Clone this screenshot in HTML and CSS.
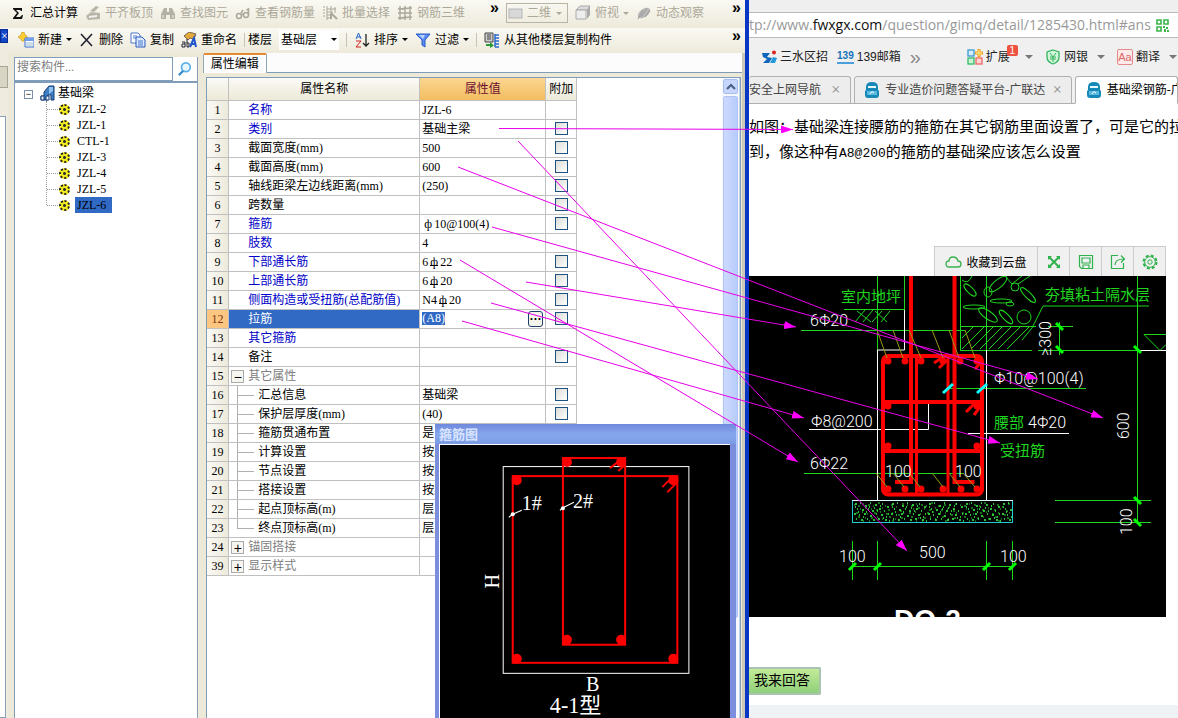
FILE: index.html
```html
<!DOCTYPE html>
<html lang="zh-CN">
<head>
<meta charset="utf-8">
<title>属性编辑</title>
<link rel="stylesheet" href="styles.css">
</head>
<body>
<div class="desktop">
<main class="app">
  <div class="toolbar toolbar-view">
    <button class="tool"><svg class="ico" viewBox="0 0 16 16"><path d="M3 3h9v3h-1l-1-1H6l3 3-3 4h4l2-2h1l-1 4H3v-1l4-5-4-4z" fill="#111"/></svg>汇总计算</button>
    <button class="tool off"><svg class="ico" viewBox="0 0 16 16"><path d="M1 11l5-4 9 1v6l-12 1zM5 6l6-5 3 1-5 5z" fill="#b9b6a8"/><path d="M4 11l8-1v2l-8 1z" fill="#eee"/></svg>平齐板顶</button>
    <button class="tool off"><svg class="ico" viewBox="0 0 16 16"><path d="M4 3h3v4h2V3h3l3 6v5h-5v-4H6v4H1V9z" fill="#b3b0a4"/><path d="M3 10v3M13 10v3" stroke="#eee"/></svg>查找图元</button>
    <button class="tool off"><svg class="ico" viewBox="0 0 16 16"><g fill="none" stroke="#aaa79c" stroke-width="1.500"><circle cx="4" cy="11" r="2.500"/><circle cx="11" cy="10" r="2.500"/><path d="M6 10l2-1M13.500 10V4l-2 1M6 8l2-3"/></g></svg>查看钢筋量</button>
    <button class="tool off"><svg class="ico" viewBox="0 0 16 16"><path d="M1 2h2M1 5h2M1 8h2M1 11h2M5 1v14M5 4h9M5 7h6M5 10h5M5 13h4M9 1v6M13 2v6" stroke="#aaa79c" fill="none"/><path d="M9 8l6 6M9 8v6" stroke="#aaa79c" stroke-width="2"/></svg>批量选择</button>
    <button class="tool off"><svg class="ico" viewBox="0 0 16 16"><path d="M3 1v14M8 1v14M13 1v14M1 4l14-1M1 8h14M1 13l14-1" stroke="#aaa79c" stroke-width="1.4" fill="none"/></svg>钢筋三维</button>
    <button class="more" aria-label="更多">»</button>
    <label class="view-mode off"><svg class="ico" viewBox="0 0 16 16"><rect x="1" y="4" width="13" height="9" fill="#d8d8d8" stroke="#b5b5b5"/></svg><select aria-label="视图"><option>二维</option></select><i class="caret"></i></label>
    <button class="tool off"><svg class="ico" viewBox="0 0 16 16"><path d="M1 5l4-4h10l-3 4z" fill="#ddd" stroke="#aaa"/><path d="M1 5h10v9H1z" fill="#eee" stroke="#aaa"/><path d="M12 5l3-4v9l-3 4z" fill="#aaa"/></svg>俯视<i class="caret"></i></button>
    <button class="tool off"><svg class="ico" viewBox="0 0 16 16"><ellipse cx="8" cy="8" rx="7" ry="4" fill="#bbb" transform="rotate(-35 8 8)"/><path d="M2 14l5-9M5 12l6-9M9 12l5-7" stroke="#999" fill="none"/></svg>动态观察</button>
    <button class="more last" aria-label="更多">»</button>
  </div>

  <div class="toolbar toolbar-edit">
    <button class="tool"><svg class="ico" viewBox="0 0 16 16"><path d="M4 0h2l1 3 2 1v2l-2 1-1 2H4L3 7 0 5l3-2z" fill="#fc3" stroke="#a80" stroke-width=".5"/><path d="M7 6h9v9H7z" fill="#fff" stroke="#3a6fd0"/><path d="M7 6h9v3H7z" fill="#6f9fee"/><path d="M8 11h7M8 13h7" stroke="#9bc"/></svg>新建<i class="caret"></i></button>
    <button class="tool"><svg class="ico" viewBox="0 0 16 16"><path d="M2 2l11 12M13 2L2 14" stroke="#223" stroke-width="1.6"/></svg>删除</button>
    <button class="tool"><svg class="ico" viewBox="0 0 16 16"><path d="M1 1h7l2 2v8H1z" fill="#fff" stroke="#4a76c8"/><path d="M6 5h6l3 3v7H6z" fill="#dceaff" stroke="#2858b8"/><path d="M3 4h4M3 6h3M8 9h5M8 11h5M8 13h5" stroke="#4a76c8"/></svg>复制</button>
    <button class="tool"><svg class="ico" viewBox="0 0 16 16"><path d="M3 4l5-4 7 2-2 5-4-1-2 2z" fill="#e5a93a" stroke="#765"/><path d="M1 10h3v5H1v-3h3M6 7v8h2v-4H6" stroke="#223" fill="none"/><path d="M9 15l4-9 2 9M10 12h5" stroke="#25c" stroke-width="2" fill="none"/></svg>重命名</button>
    <i class="sep"></i>
    <label class="floor" for="floor">楼层</label>
    <span class="floor-box"><select id="floor"><option>基础层</option></select><i class="caret"></i></span>
    <i class="sep"></i>
    <button class="tool"><svg class="ico" viewBox="0 0 16 16"><path d="M2 7l2.500-6 2.500 6M3 5h4" stroke="#26c" fill="none"/><path d="M2 9h5l-5 6h5" stroke="#c22" fill="none"/><path d="M12 2v12M9 11l3 3 3-3" stroke="#222" fill="none" stroke-width="1.300"/></svg>排序<i class="caret"></i></button>
    <button class="tool"><svg class="ico" viewBox="0 0 16 16"><path d="M1 2h14L10 8v7l-3-2V8z" fill="#5b8df0" stroke="#2458c8"/><path d="M4 3h6L8 7z" fill="#bcd4ff"/></svg>过滤<i class="caret"></i></button>
    <i class="sep"></i>
    <button class="tool"><svg class="ico" viewBox="0 0 16 16"><path d="M1 1h8v9H1z" fill="#ccc" stroke="#444"/><path d="M3 3h4M3 5h4M3 7h4" stroke="#444"/><path d="M11 2v13M11 3h4M11 6h4M11 9h4M11 12h4M11 15h4" stroke="#2a6ad0" stroke-width="1.500"/><path d="M2 12h4v-2l4 3.500-4 2.500v-2H2z" fill="#2b9a3a"/></svg>从其他楼层复制构件</button>
    <button class="more last" aria-label="更多">»</button>
  </div>

  <div class="work">
    <div class="dock"><button class="dock-close" aria-label="关闭">×</button><div class="dock-tab"></div><div class="dock-body"></div></div>
    <aside class="side">
      <div class="search"><input type="text" placeholder="搜索构件..." aria-label="搜索构件"><button class="find" aria-label="搜索"><svg viewBox="0 0 16 16" width="14" height="14"><circle cx="9" cy="6" r="5" fill="#e8f7ff" stroke="#5ab0e8" stroke-width="2"/><path d="M6 10l-5 5" stroke="#3a8ccc" stroke-width="2.500"/></svg></button></div>
      <ul class="tree">
        <li class="root"><i class="twist">−</i><svg class="ico" viewBox="0 0 16 16"><path d="M1 15v-4h3V7l5-6h5v14h-3v-5H8v5z" fill="#3f7fc4" stroke="#123a70"/><path d="M1 11h3v4H1zM6 11h3v4H6z" fill="#e8f2ff" stroke="#123a70"/><path d="M9 2v7l4-3V2z" fill="#8fc0f0"/></svg>基础梁
          <ul class="leaves">
            <li><i class="gear"></i><span>JZL-2</span></li>
            <li><i class="gear"></i><span>JZL-1</span></li>
            <li><i class="gear"></i><span>CTL-1</span></li>
            <li><i class="gear"></i><span>JZL-3</span></li>
            <li><i class="gear"></i><span>JZL-4</span></li>
            <li><i class="gear"></i><span>JZL-5</span></li>
            <li class="current"><i class="gear"></i><span>JZL-6</span></li>
          </ul>
        </li>
      </ul>
    </aside>
    <section class="editor">
      <div class="tabstrip"><button class="tab">属性编辑</button></div>
      <div class="sheet">
        <div class="grid-area">
        <table class="props">
          <colgroup><col class="c-num"><col class="c-name"><col class="c-val"><col class="c-add"></colgroup>
          <thead><tr><th></th><th>属性名称</th><th class="hot">属性值</th><th>附加</th></tr></thead>
          <tbody>
            <tr><th>1</th><td class="key">名称</td><td>JZL-6</td><td></td></tr>
            <tr><th>2</th><td class="key">类别</td><td>基础主梁</td><td><input type="checkbox" aria-label="附加 2"></td></tr>
            <tr><th>3</th><td>截面宽度(mm)</td><td>500</td><td><input type="checkbox" aria-label="附加 3"></td></tr>
            <tr><th>4</th><td>截面高度(mm)</td><td>600</td><td><input type="checkbox" aria-label="附加 4"></td></tr>
            <tr><th>5</th><td>轴线距梁左边线距离(mm)</td><td>(250)</td><td><input type="checkbox" aria-label="附加 5"></td></tr>
            <tr><th>6</th><td>跨数量</td><td></td><td><input type="checkbox" aria-label="附加 6"></td></tr>
            <tr><th>7</th><td class="key">箍筋</td><td><span class="bar">ф</span>10@100(4)</td><td><input type="checkbox" aria-label="附加 7"></td></tr>
            <tr><th>8</th><td class="key">肢数</td><td>4</td><td></td></tr>
            <tr><th>9</th><td class="key">下部通长筋</td><td>6<span class="bar hrb">ф</span>22</td><td><input type="checkbox" aria-label="附加 9"></td></tr>
            <tr><th>10</th><td class="key">上部通长筋</td><td>6<span class="bar hrb">ф</span>20</td><td><input type="checkbox" aria-label="附加 10"></td></tr>
            <tr><th>11</th><td class="key">侧面构造或受扭筋(总配筋值)</td><td>N4<span class="bar hrb">ф</span>20</td><td><input type="checkbox" aria-label="附加 11"></td></tr>
            <tr class="picked"><th>12</th><td>拉筋</td><td><div class="edit"><mark>(A8)</mark><button aria-label="更多选项">···</button></div></td><td><input type="checkbox" aria-label="附加 12"></td></tr>
            <tr><th>13</th><td class="key">其它箍筋</td><td></td><td></td></tr>
            <tr><th>14</th><td>备注</td><td></td><td><input type="checkbox" aria-label="附加 14"></td></tr>
            <tr class="group"><th>15</th><td><button>−</button>其它属性</td><td></td><td></td></tr>
            <tr class="sub"><th>16</th><td>汇总信息</td><td>基础梁</td><td><input type="checkbox" aria-label="附加 16"></td></tr>
            <tr class="sub"><th>17</th><td>保护层厚度(mm)</td><td>(40)</td><td><input type="checkbox" aria-label="附加 17"></td></tr>
            <tr class="sub"><th>18</th><td>箍筋贯通布置</td><td>是</td><td></td></tr>
            <tr class="sub"><th>19</th><td>计算设置</td><td>按默认</td><td></td></tr>
            <tr class="sub"><th>20</th><td>节点设置</td><td>按默认</td><td></td></tr>
            <tr class="sub"><th>21</th><td>搭接设置</td><td>按默认</td><td></td></tr>
            <tr class="sub"><th>22</th><td>起点顶标高(m)</td><td>层底</td><td></td></tr>
            <tr class="sub end"><th>23</th><td>终点顶标高(m)</td><td>层底</td><td></td></tr>
            <tr class="group"><th>24</th><td><button>+</button>锚固搭接</td><td></td><td></td></tr>
            <tr class="group"><th>39</th><td><button>+</button>显示样式</td><td></td><td></td></tr>
          </tbody>
        </table>
        </div>
        <div class="scroll"><button aria-label="向上"><svg viewBox="0 0 10 8" width="10" height="8"><path d="M1 6l4-4 4 4" fill="none" stroke="#4d6185" stroke-width="2.200"/></svg></button><div class="thumb"></div></div>
      </div>
    </section>
  </div>

  <section class="stirrup">
    <h2>箍筋图</h2>
    <svg class="stirrup-art" viewBox="440 446 290 272" preserveAspectRatio="xMidYMin slice">
      <rect x="503.500" y="467.500" width="185" height="206" fill="none" stroke="#fff"/>
      <g fill="none" stroke="#f00" stroke-width="2"><rect x="513" y="477" width="164" height="186"/><rect x="563" y="459" width="62" height="186"/><path d="M610 469l9-7M618 472l7-6M662 488l11-11M667 493l10-10"/></g>
      <g fill="#f00"><circle cx="517" cy="481" r="5"/><circle cx="673" cy="481" r="5"/><circle cx="517" cy="659" r="5"/><circle cx="673" cy="659" r="5"/><circle cx="567" cy="463" r="5"/><circle cx="621" cy="463" r="5"/><circle cx="567" cy="640" r="5"/><circle cx="621" cy="640" r="5"/></g>
      <path d="M509 518l4-3 9-4M560 511l4-3 10-5" stroke="#fff" fill="none"/><circle cx="513" cy="515" r="2" fill="#fff"/><circle cx="563" cy="509" r="2" fill="#fff"/>
      <g class="art-label"><text x="522" y="511">1#</text><text x="573" y="509">2#</text><text x="586" y="691">B</text><text transform="translate(499 589) rotate(-90)">H</text></g>
      <text class="art-title" x="550" y="713">4-1型</text>
    </svg>
  </section>
</main>

<section class="browser">
  <div class="address"><span class="url">tp://www.<b>fwxgx.com</b>/question/gimq/detail/1285430.html#ans</span><svg viewBox="0 0 13 13" width="13" height="13"><path d="M1 1h4v4H1zM8 1h4v4H8zM1 8h4v4H1z" fill="none" stroke="#39b54a" stroke-width="1.600"/><path d="M7 7h2v2H7zM10 8h2v2h-2zM8 10h2v3H8zM11 11h2v2h-2zM6 0v6M0 6.500h5" fill="#39b54a"/></svg></div>
  <nav class="links">
    <a href="#"><svg width="15" height="14" viewBox="0 0 15 14"><path d="M0 3h8l-3 4 5 1-3 5H1l4-4-4-2z" fill="#16b"/><path d="M8 13l3-6 4 1-2 5z" fill="#29d"/><circle cx="12" cy="2.500" r="2" fill="#d22"/></svg>三水区招</a>
    <a href="#"><b class="mail">139</b>139邮箱</a>
    <button class="chev" aria-label="更多书签">»</button>
    <i class="grip"></i>
    <a href="#" class="ext"><svg width="16" height="16" viewBox="0 0 16 16"><g stroke-width="1.300"><rect x="1" y="1" width="6" height="6" fill="#d5ecfa" stroke="#3b99cf"/><rect x="1" y="9" width="6" height="6" fill="#ccf2d5" stroke="#3b6"/><rect x="9" y="9" width="6" height="6" fill="#ffd5d0" stroke="#e66"/><path d="M12 0v8M8 4h8" stroke="#f0a020" stroke-width="3"/><path d="M12 1v6M9 4h6" stroke="#fd7"/></g></svg>扩展<em>1</em></a><i class="drop"></i>
    <a href="#"><svg width="16" height="16" viewBox="0 0 16 16"><path d="M8 1l6 2v5q0 5-6 7-6-2-6-7V3z" fill="#d2f5da" stroke="#34b560" stroke-width="1.300"/><path d="M5 4l3 4 3-4M8 8v5M5 8h6M5 10h6" fill="none" stroke="#34b560"/></svg>网银</a><i class="drop"></i>
    <a href="#"><b class="aa">Aa</b>翻译</a><i class="drop"></i>
  </nav>
  <div class="tabs">
    <a href="#" class="t1"><span>安全上网导航</span><i>×</i></a>
    <a href="#" class="t2"><svg class="bot" viewBox="0 0 16 16"><path d="M2 5q0-5 6-5t6 5v3l1 1v4q0 3-3 3H4q-3 0-3-3V9l1-1z" fill="#1689b8"/><path d="M4 4h8v2H4z" fill="#eaf8ff"/><path d="M3 9h10v4H3z" fill="#5bbce0"/><path d="M6 12q2-4 4-1" stroke="#fff" fill="none"/></svg><span>专业造价问题答疑平台-广联达</span><i>×</i></a>
    <a href="#" class="t3"><svg class="bot" viewBox="0 0 16 16"><path d="M2 5q0-5 6-5t6 5v3l1 1v4q0 3-3 3H4q-3 0-3-3V9l1-1z" fill="#1689b8"/><path d="M4 4h8v2H4z" fill="#eaf8ff"/><path d="M3 9h10v4H3z" fill="#5bbce0"/><path d="M6 12q2-4 4-1" stroke="#fff" fill="none"/></svg><span>基础梁钢筋-广</span></a>
  </div>
  <article class="page">
    <p class="question">如图：基础梁连接腰筋的箍筋在其它钢筋里面设置了，可是它的拉<br>到，像这种有<code>A8@200</code>的箍筋的基础梁应该怎么设置</p>
    <div class="figure">
      <div class="picbar">
        <button><svg width="17" height="14" viewBox="0 0 17 14"><path d="M4 12q-3 0-3-3t3-3q0-4 4-4t5 4q3 0 3 3t-3 3z" fill="none" stroke="#39b04e" stroke-width="1.300"/></svg>收藏到云盘</button>
        <button aria-label="放大"><svg width="16" height="16" viewBox="0 0 16 16"><path d="M3 3l10 10M13 3L3 13" stroke="#2fb24c" stroke-width="2"/><path d="M2 2h4L2 6zM14 2v4l-4-4zM2 14v-4l4 4zM14 14h-4l4-4z" fill="#2fb24c"/></svg></button>
        <button aria-label="保存"><svg width="16" height="16" viewBox="0 0 16 16"><path d="M1.500 1.500h13v13h-11l-2-2zM4 4h8v5H4zM5 14v-3h6v3" fill="none" stroke="#2fb24c" stroke-width="1.200"/></svg></button>
        <button aria-label="分享"><svg width="16" height="16" viewBox="0 0 16 16"><path d="M8 1.500H1.500v13h12V9M5 11q0-6 9-6M11 1.500L14.500 5 11 8.500" fill="none" stroke="#2fb24c" stroke-width="1.200"/></svg></button>
        <button aria-label="设置"><svg width="16" height="16" viewBox="0 0 16 16"><circle cx="8" cy="8" r="6.500" fill="none" stroke="#2fb24c" stroke-width="2" stroke-dasharray="3 2.100"/><circle cx="8" cy="8" r="5.300" fill="none" stroke="#2fb24c"/><circle cx="8" cy="8" r="2.200" fill="none" stroke="#2fb24c"/></svg></button>
      </div>
      <svg class="cad" viewBox="749 276 417 341">
        <defs>
          <pattern id="grit" width="37" height="22" patternUnits="userSpaceOnUse" x="853" y="501"><path d="M2 3h2M7 2h1M12 5h2M17 2h1M22 4h2M29 3h1M34 6h2M4 8h1M9 9h2M15 8h1M19 10h2M26 8h2M31 10h1M1 13h2M6 14h1M11 13h2M17 15h2M23 13h1M28 14h2M35 13h1M3 18h1M8 19h2M14 18h1M20 19h2M25 18h2M32 19h2M10 16h1M27 5h1M21 7h1M33 16h1M13 11h1M5 11h1M16 6h1M24 10h1M2 6h1M30 17h1M36 20h1" stroke="#3cff4a" stroke-width="1.300"/></pattern>
          <pattern id="grit-fine" width="53" height="22" patternUnits="userSpaceOnUse" x="853" y="501"><path d="M1 4h1M5 5h2M10 3h1M15 4h2M20 5h1M25 2h2M32 5h1M38 4h2M43 6h1M49 3h2M7 8h1M12 7h2M18 8h1M23 9h2M29 7h1M35 9h2M41 8h1M47 10h2M3 12h2M9 11h1M14 13h1M21 12h2M27 11h1M33 13h2M39 12h1M45 14h2M50 12h1M5 16h2M12 17h1M18 17h2M24 16h1M29 18h1M36 16h2M42 18h1M48 17h2M16 20h1M39 20h2M10 20h1" stroke="#2fe03c"/></pattern>
        </defs>
        <g fill="none" stroke="#1fd61f">
          <path d="M877.500 276v74M904.500 276v34M960.500 276v74M986.500 276v74M844 309.500h60M801 330.500h164M960 326.500h76M960 350.500h72M1038 350.500h99M950 388.500h136M1022 340l10-12 11-22h106M1059.500 322v33M1048 326.500h25M1137.500 276v248M804 473.500h159M1055 500.500h96M1055 522.500h96M852 566.500h161M852.500 541v39M877.500 541v39M986.500 541v39M1012.500 541v39M1144 334.500h22M1144 334.500l16 16 6-6"/>
          <path d="M855 322l10-12M863 322l10-12M857 311l14 11M872 322l10-11M881 322l9-11M875 311l12 11"/>
          <path d="M962 349l22-22M971 349l22-22M980 349l22-22M989 349l22-22M998 349l22-22M1007 349l22-22M962 338l11-11"/>
          <ellipse cx="970" cy="290" rx="8" ry="3" transform="rotate(45 970 290)"/><ellipse cx="988" cy="292" rx="4" ry="5"/><ellipse cx="998" cy="284" rx="11" ry="4" transform="rotate(-40 998 284)"/><ellipse cx="1015" cy="287" rx="4" ry="4"/><ellipse cx="1028" cy="295" rx="10" ry="3" transform="rotate(45 1028 295)"/><ellipse cx="1001" cy="301" rx="11" ry="2"/><ellipse cx="974" cy="307" rx="11" ry="2"/><ellipse cx="988" cy="315" rx="11" ry="4" transform="rotate(35 988 315)"/><ellipse cx="1006" cy="317" rx="9" ry="3" transform="rotate(45 1006 317)"/><circle cx="1024" cy="317" r="7"/><ellipse cx="1010" cy="304" rx="4" ry="2"/><path d="M962 280q6 5 10-4M1005 276l7 8 10-8M1018 284l12-8"/>
        </g>
        <path d="M904.500 310v40h-27v150M986.500 350v150M1140 350.500h26M809 429.500h119.500V401M968 433.500h101" fill="none" stroke="#fff"/>
        <g fill="none" stroke="#f00" stroke-width="4"><path d="M911 276v206h-16M954.500 276v206h20M883 402h98M883 451h98"/><path d="M916.500 356v138M948 356v138" stroke-width="3"/><rect x="883" y="356" width="99" height="138.500" rx="5"/><path d="M966 412l9-9M974 415l6-8M934 363l9-6M939 368l8-8M975 369l7-8" stroke-width="3"/></g>
        <g fill="#f00"><circle cx="888" cy="361" r="3.500"/><circle cx="905" cy="361" r="3.500"/><circle cx="921" cy="361" r="3.500"/><circle cx="943" cy="361" r="3.500"/><circle cx="960" cy="361" r="3.500"/><circle cx="977" cy="361" r="3.500"/><circle cx="888" cy="406" r="3.500"/><circle cx="977" cy="406" r="3.500"/><circle cx="888" cy="446" r="3.500"/><circle cx="977" cy="446" r="3.500"/><circle cx="888" cy="489" r="3.500"/><circle cx="905" cy="489" r="3.500"/><circle cx="921" cy="489" r="3.500"/><circle cx="943" cy="489" r="3.500"/><circle cx="961" cy="489" r="3.500"/><circle cx="977" cy="489" r="3.500"/></g>
        <path d="M877 330l10 28M893 330l10 28M909 330l12 28M932 330l11 28M949 330l10 28M965 330l10 28M876 473l11 14M893 473l11 14M909 473l11 14M932 473l11 14M949 473l11 14M963 473l12 14" fill="none" stroke="#9a9a10"/>
        <path d="M943 393l10-9M977 393l10-9" stroke="#1ff" stroke-width="3"/>
        <rect x="853" y="501" width="159" height="21" fill="url(#grit-fine)"/><rect x="852.500" y="500.500" width="160" height="22" fill="url(#grit)" stroke="#2cc"/><path d="M852 500.500h161" stroke="#dff"/>
        <path d="M1056 323l7 7M1056 346l7 7M1134 346l7 7M1134 497l7 7M1134 519l7 7M849 570l7-7M874 570l7-7M983 570l7-7M1009 570l7-7" stroke="#0f0" stroke-width="3"/>
        <g class="cad-num"><text x="810" y="326">6Φ20</text><text x="994" y="384">Φ10@100(4)</text><text x="811" y="427">Φ8@200</text><text x="1028" y="428">4Φ20</text><text x="810" y="469">6Φ22</text><text x="885" y="477">100</text><text x="955" y="477">100</text><text x="839" y="562">100</text><text x="919" y="558">500</text><text x="1000" y="562">100</text><text transform="translate(1051 356) rotate(-90)">≥300</text><text transform="translate(1129 439) rotate(-90)">600</text><text transform="translate(1132 535) rotate(-90)">100</text></g>
        <g class="cad-han"><text x="841" y="302">室内地坪</text><text x="1045" y="300">夯填粘土隔水层</text><text x="994" y="428">腰部</text><text x="1000" y="456">受扭筋</text></g>
        <text class="cad-title" x="894" y="629">DQ-2</text>
      </svg>
    </div>
    <button class="answer">我来回答</button>
  </article>
  <footer class="foot"></footer>
</section>

<svg class="arrows" viewBox="0 0 1178 718">
  <defs><marker id="tip" markerUnits="userSpaceOnUse" markerWidth="12" markerHeight="8" refX="12" refY="4" orient="auto"><path d="M0 0l12 4-12 4z" fill="#f0f"/></marker></defs>
  <g stroke="#e800e8" fill="none"><path d="M499 128.500L793 129.500" marker-end="url(#tip)"/><path d="M518 141L907 551" marker-end="url(#tip)"/><path d="M458 167L1103 418" marker-end="url(#tip)"/><path d="M492 227L1038 379" marker-end="url(#tip)"/><path d="M460 260L798 462" marker-end="url(#tip)"/><path d="M526 282L796 327" marker-end="url(#tip)"/><path d="M491 303L1000 443" marker-end="url(#tip)"/><path d="M462 321L804 418" marker-end="url(#tip)"/></g>
</svg>
</div>
</body>
</html>
```

FILE: styles.css
```css
* { box-sizing: border-box; }
body {
  margin: 0;
  font: 12px/16px "Liberation Serif", "Noto Sans CJK SC", sans-serif;
  color: #000;
}
button, input, select { font: inherit; color: inherit; margin: 0; padding: 0; border: 0; background: none; }
a { color: inherit; text-decoration: none; }
i, em { font-style: normal; }
svg { flex: none; }
ul { list-style: none; margin: 0; padding: 0; }

.desktop { position: relative; display: flex; height: 100vh; overflow: hidden; }
.arrows { position: absolute; inset: 0; width: 100%; height: 100%; pointer-events: none; }

/* Modelling application */
.app {
  position: relative;
  flex: 745 1 0;
  min-width: 0;
  display: flex;
  flex-direction: column;
  background: #ece9d8;
  border-right: 4px solid #0a36c4;
  overflow: hidden;
}
.toolbar { display: flex; align-items: center; gap: 7px; white-space: nowrap; background: linear-gradient(#faf9f3, #edeadb); }
.toolbar-view { height: 28px; padding: 0 4px 2px 10px; }
.toolbar-edit { height: 25px; padding: 0 4px 2px 18px; }
.tool { display: flex; align-items: center; gap: 4px; }
.off { color: #aca899; }
.ico { width: 16px; height: 16px; }
.caret { border: 3px solid transparent; border-top-color: currentColor; border-bottom: 0; }
.more { font: bold 16px/16px "Liberation Sans", sans-serif; align-self: flex-start; margin-left: 18px; }
.more.last { margin-left: auto; }
.view-mode { display: flex; align-items: center; gap: 3px; width: 62px; height: 20px; padding: 0 5px 0 1px; border: 1px solid #b8b5a6; }
select { appearance: none; flex: 1; min-width: 0; }
.sep { width: 1px; height: 14px; background: #c5c2b2; }
.floor { margin-left: -4px; }
.floor-box { display: flex; align-items: center; width: 60px; height: 20px; padding: 0 2px; background: #fff; }

.work { flex: 1; display: flex; min-height: 0; }
.dock { width: 8px; display: flex; flex-direction: column; margin-top: -24px; background: #efecdf; }
.dock-close { height: 14px; background: #1248c8; color: #fff; border: 1px solid #0a2c90; line-height: 10px; overflow: hidden; }
.dock-tab { height: 22px; margin-top: 23px; background: #d9d5c4; border: 1px solid #aaa696; border-left: 0; }
.dock-body { flex: 1; margin: 28px 2px 0 0; background: #fff; border: 1px solid #8a9fba; border-left: 0; }

.side { flex: 183 1 0; min-width: 0; margin: 4px 0 0 6px; display: flex; flex-direction: column; border-right: 1px solid #8a9fba; }
.search { display: flex; height: 26px; border-bottom: 2px solid #7f9db9; background: #fff; }
.search input { flex: 1; min-width: 0; border: 1px solid #7f9db9; padding: 0 2px 4px; background: #fff; }
.search input::placeholder { color: #808080; opacity: 1; }
.find { width: 24px; display: grid; place-items: center; }
.tree { flex: 1; padding: 2px 0 0 9px; background: #fff; border-left: 1px solid #7f9db9; }
.root .ico { vertical-align: top; margin: 0 2px 0 7px; }
.twist { display: inline-block; width: 9px; height: 9px; border: 1px solid #7f8fa5; font: 9px/7px "Liberation Sans", sans-serif; text-align: center; }
.leaves { margin-left: 22px; border-left: 1px dotted #999; height: 104px; }
.leaves li { display: flex; align-items: center; height: 16px; }
.leaves li::before { content: ""; width: 11px; border-top: 1px dotted #999; }
.gear { width: 11px; height: 11px; margin: 0 5px 0 1px; border: 2px dotted #222; border-radius: 50%; background: radial-gradient(#333 0 1px, #f6ee20 2px); }
.leaves span { padding: 0 4px 0 2px; }
.current span { background: #316ac5; padding-right: 6px; }

.editor { flex: 540 1 0; min-width: 0; margin-left: 5px; display: flex; flex-direction: column; border-right: 3px solid #cdc9b9; }
.tabstrip { height: 20px; background: #fcfcfd; border-bottom: 1px solid #7f9db9; }
.tab { width: 64px; height: 20px; border: 1px solid #91a7b4; border-top: 2px solid #e68b2c; border-bottom: 0; border-radius: 2px 2px 0 0; background: #fcfcfe; line-height: 14px; }
.sheet { flex: 1; min-height: 0; display: flex; margin: 4px 1px 0 3px; border: 1px solid #7f9db9; border-bottom: 0; background: #fff; }
.grid-area { flex: 1; min-width: 0; overflow: hidden; }

.props { width: 370px; table-layout: fixed; border-collapse: collapse; }
.c-num { width: 22px; } .c-name { width: 191px; } .c-val { width: 126px; } .c-add { width: 31px; }
.props th, .props td { height: 19px; padding: 0 2px; border: 1px solid #c0c0c0; border-top: 0; border-left: 0; font-weight: normal; text-align: left; white-space: nowrap; overflow: hidden; line-height: 16px; }
.props thead th { height: 22px; padding: 0; text-align: center; background: linear-gradient(#fbfaf5, #ece9d8); }
.props thead .hot { background: linear-gradient(#fbd591, #f2bd60); color: #6b0f2f; }
.props tbody th { padding: 0; text-align: center; background: linear-gradient(90deg, #faf9f4, #edeadb); }
.props td:nth-child(2) { padding-left: 19px; }
.props td:last-child { padding: 0; text-align: center; }
.props .key { color: #0000c8; }
.props input { appearance: none; display: block; width: 13px; height: 13px; margin: 0 auto; border: 1px solid #1c5180; background: linear-gradient(135deg, #dcdcd7, #fff); }
.props .picked th { background: #fbc780; color: #803010; }
.props .picked td:nth-child(2) { background: #316ac5; color: #fff; }
.bar { display: inline-block; width: 12px; text-align: center; line-height: 10px; }
.hrb { background: linear-gradient(#000, #000) center 8px / 8px 1px no-repeat; }
.edit { display: flex; justify-content: space-between; align-items: center; height: 18px; }
.edit mark { background: #316ac5; color: #fff; line-height: 13px; }
.edit button { width: 15px; height: 16px; border: 1px solid #1c3f70; border-radius: 3px; background: #f4f3ec; font: bold 12px/10px "Liberation Sans", sans-serif; overflow: hidden; }
.props .group td:nth-child(2) { padding-left: 2px; color: #808080; }
.group button { width: 13px; height: 13px; margin-right: 4px; border: 1px solid #aaa; background: #f6f5ef; color: #000; font: 14px/10px "Liberation Sans", sans-serif; vertical-align: middle; }
.props .sub td:nth-child(2) { padding-left: 29px; background: linear-gradient(#b0b0b0, #b0b0b0) 8px 9px / 17px 1px no-repeat, linear-gradient(#b0b0b0, #b0b0b0) 8px 0 / 1px 19px no-repeat; }
.props .end td:nth-child(2) { background-size: 17px 1px, 1px 9px; }

.scroll { width: 18px; padding: 1px 2px 0 1px; border-right: 1px solid #c5d5e5; background: #f6f8ff; }
.scroll button { display: grid; place-items: center; width: 15px; height: 15px; border: 1px solid #a8bdee; border-radius: 2px; background: #c6d6fd; }
.thumb { width: 15px; height: 522px; margin-top: 2px; border: 1px solid #b0c4f4; border-radius: 2px; background: linear-gradient(90deg, #ccdafe, #b8cbfa); }

.stirrup { position: absolute; left: 435px; top: 424px; right: 9px; bottom: 0; display: flex; flex-direction: column; padding: 0 6px 0 4px; background: #7b8ede; border-radius: 3px 3px 0 0; }
.stirrup h2 { margin: 0 -6px 0 -4px; padding: 0 4px; height: 20px; font: bold 13px/20px "Noto Sans CJK SC", sans-serif; color: #d8e4ff; background: linear-gradient(#6f88dc, #86a6ec 50%, #7b9be6); }
.stirrup-art { flex: 1; min-height: 0; width: 100%; border: 1px solid #fff; border-width: 1px 0 0 1px; background: #000; }
.stirrup-art text { fill: #fff; }
.art-label { font-size: 20px; }
.art-title { font-size: 22px; }

/* Web browser */
.browser { flex: 429 1 0; min-width: 0; display: flex; flex-direction: column; background: #fff; overflow: hidden; white-space: nowrap; }
.address { display: flex; align-items: center; gap: 7px; height: 26px; margin-top: 12px; border: 1px solid #bbb; border-width: 1px 0; box-shadow: 0 -12px 0 #efefef; color: #999; font: 14px/24px "Open Sans", "Noto Sans", sans-serif; }
.url { width: 400px; }
.url b { font-weight: normal; color: #111; }
.links { display: flex; align-items: center; height: 38px; padding: 0 0 0 13px; background: #f0f0f0; color: #222; font: 12px/16px "Liberation Sans", "Noto Sans CJK SC", sans-serif; }
.links a { display: flex; align-items: center; gap: 3px; margin-right: 9px; }
.mail { padding: 0 0 1px; border-bottom: 2px solid #4aa0dc; color: #1673bb; font: bold 10px/10px "Liberation Sans", sans-serif; }
.chev { font-size: 20px; color: #888; margin-right: 32px; }
.grip { width: 2px; height: 14px; margin-right: 14px; background: repeating-linear-gradient(#bbb 0 2px, transparent 2px 5px); }
.ext { position: relative; }
.ext em { position: absolute; right: -8px; top: -11px; width: 11px; height: 11px; background: #ee5340; border-radius: 2px; color: #fff; font-size: 10px; line-height: 11px; text-align: center; }
.links .ext em { top: -4px; }
.drop { margin: 0 12px 0 6px; border: 4px solid transparent; border-top-color: #777; border-bottom: 0; }
.links a:not(.ext) + .drop { margin-left: 0; }
.aa { width: 16px; height: 16px; border: 1px solid #e58a8a; border-radius: 2px; background: #fdeaea; color: #d66; font: 11px/14px "Liberation Sans", sans-serif; text-align: center; }
.tabs { display: flex; gap: 3px; height: 28px; background: #f0f0f0; color: #444; border-bottom: 1px solid #b0b0b0; }
.tabs a { display: flex; align-items: center; gap: 5px; height: 28px; border: 1px solid #b0b0b0; border-radius: 3px 3px 0 0; background: #ededed; overflow: hidden; }
.tabs span { flex: 1; min-width: 0; overflow: hidden; }
.tabs i { font-size: 16px; color: #888; }
.tabs .t1 { flex: 102 1 0; border-left: 0; padding-right: 10px; }
.tabs .t2 { flex: 221 1 0; padding: 0 9px 0 9px; }
.tabs .t3 { flex: 102 1 0; padding-left: 10px; background: #fff; color: #000; border-bottom-color: #fff; }
.bot { width: 16px; height: 16px; }
.page { flex: 1; min-height: 0; display: flex; flex-direction: column; align-items: flex-start; }
.question { margin: 11px 0 81px; font-size: 15px; line-height: 25px; }
.question code { font: 13px/15px "Liberation Mono", monospace; }
.figure { align-self: stretch; margin-right: 12px; }
.picbar { display: flex; width: 232px; height: 30px; margin-left: auto; border: 1px solid #ccc; border-bottom: 0; background: #f0f0f0; }
.picbar button { flex: 1; display: flex; align-items: center; justify-content: center; gap: 4px; border-left: 1px solid #ccc; font-family: "Noto Sans CJK SC", sans-serif; }
.picbar button:first-child { flex: 0 0 102px; border-left: 0; }
.cad { display: block; width: 100%; background: #000; overflow: hidden; }
.cad-num { fill: #fff; font: 300 16px Roboto, "Liberation Sans", sans-serif; }
.cad-han { fill: #1fd61f; font: 15px "Noto Sans CJK SC", sans-serif; }
.cad-title { fill: #fff; font: bold 28px "Liberation Sans", sans-serif; }
.answer { width: 72px; height: 28px; margin-top: 50px; padding-right: 4px; border: 2px solid #a8c4b0; border-left: 0; border-radius: 0 2px 2px 0; background: linear-gradient(#c3ea98, #8fd07a); font-size: 14px; }
.foot { height: 13px; background: #eff2f4; }
```
